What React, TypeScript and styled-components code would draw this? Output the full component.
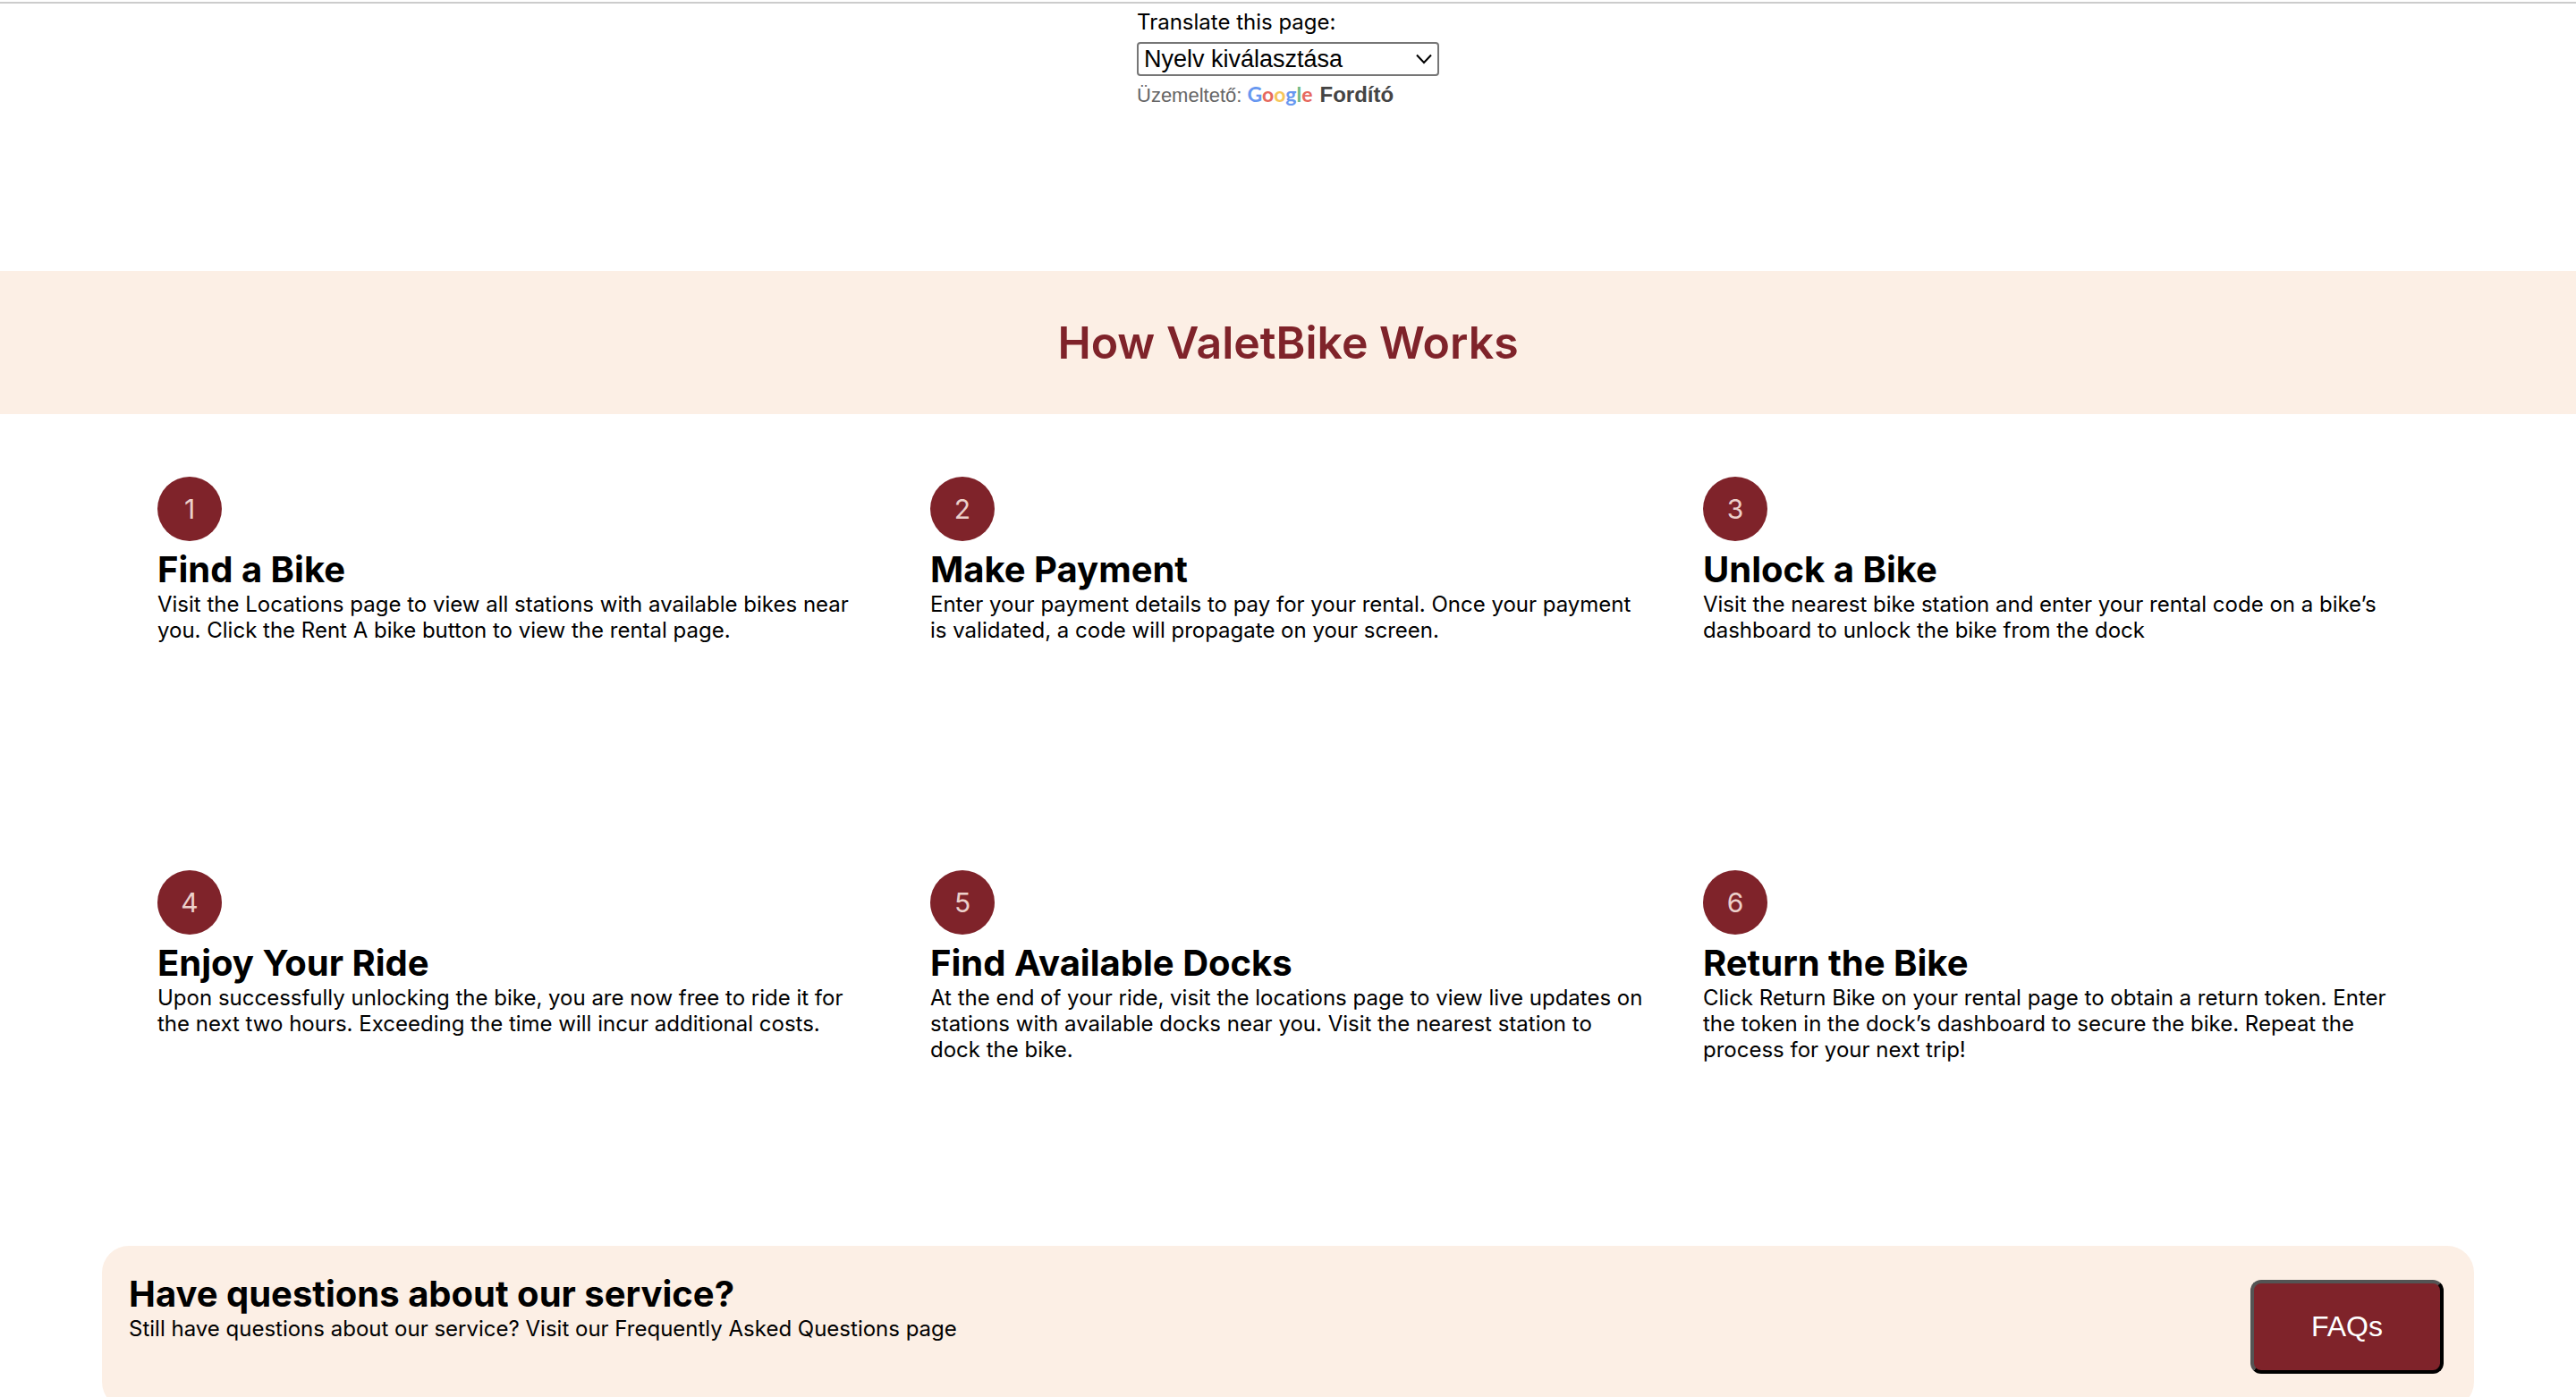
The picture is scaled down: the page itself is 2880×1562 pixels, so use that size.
import React from "react";
import styled, { createGlobalStyle } from "styled-components";

const maroon = "#7f232a";
const cream = "#fcefe5";

const GlobalStyle = createGlobalStyle`
  *, *::before, *::after { box-sizing: border-box; }
  body {
    margin: 0;
    background: #fff;
    color: #000;
    font-family: Inter, "Liberation Sans", sans-serif;
    font-size: 24px;
    line-height: 29px;
  }
  h1, h2, p { margin: 0; }
`;

const Page = styled.div`
  display: flex;
  flex-direction: column;
  height: 100vh;
  overflow: hidden;
`;

const TranslateBar = styled.header`
  display: flex;
  justify-content: center;
  flex-shrink: 0;
  min-height: 301px;
  margin-top: 2px;
  padding-top: 6px;
  border-top: 2px solid #ccc;
`;

const Translate = styled.div`
  display: flex;
  flex-direction: column;
  width: 338px;
`;

const SelectWrap = styled.div`
  display: grid;
  align-items: center;
  margin: 8px 0;
`;

const LanguageSelect = styled.select`
  grid-area: 1 / 1;
  width: 100%;
  height: 38px;
  padding: 0 6px;
  appearance: none;
  background: #fff;
  border: 2px solid #767676;
  border-radius: 4px;
  color: #000;
  font: 27px "Liberation Sans", Arial, sans-serif;
`;

const Chevron = styled.svg`
  grid-area: 1 / 1;
  justify-self: end;
  width: 18px;
  height: 12px;
  margin-right: 8px;
  pointer-events: none;
`;

const PoweredBy = styled.div`
  display: flex;
  align-items: baseline;
  color: #666;
  font: 22px/24px "Liberation Sans", Arial, sans-serif;
`;

const TranslateLink = styled.a`
  display: flex;
  align-items: baseline;
  gap: 8px;
  margin-left: 6px;
  color: #444;
  font-size: 24px;
  font-weight: 700;
  text-decoration: none;
`;

const GoogleMark = styled.span`
  font-family: Lato, sans-serif;
  font-size: 23px;
  font-weight: 700;
`;

const Letter = styled.span<{ $color: string }>`
  color: ${(p) => p.$color};
`;

const Banner = styled.section`
  display: flex;
  align-items: center;
  justify-content: center;
  flex-shrink: 0;
  height: 160px;
  background: ${cream};
`;

const BannerTitle = styled.h1`
  color: ${maroon};
  font-size: 50px;
  font-weight: 600;
  line-height: 60px;
`;

const Steps = styled.main`
  display: grid;
  grid-template-columns: repeat(3, 1fr);
  grid-auto-rows: 420px;
  row-gap: 20px;
  flex-shrink: 0;
  padding: 70px 144px 0;
`;

const StepCard = styled.article`
  padding: 0 32px;
`;

const StepNumber = styled.div`
  display: flex;
  align-items: center;
  justify-content: center;
  width: 72px;
  height: 72px;
  margin-bottom: 8px;
  border-radius: 50%;
  background: ${maroon};
  color: #ecd0ca;
  font-size: 30px;
`;

const Heading = styled.h2`
  font-size: 40px;
  font-weight: 700;
  line-height: 48px;
`;

const FaqCard = styled.section`
  display: flex;
  justify-content: space-between;
  flex-shrink: 0;
  height: 182px;
  margin: 0 114px;
  padding: 30px 34px 30px 30px;
  border-radius: 30px;
  background: ${cream};
`;

const FaqButton = styled.button`
  width: 216px;
  height: 105px;
  margin-top: 8px;
  border: 4px outset #000;
  border-radius: 12px;
  background: ${maroon};
  color: #fff;
  font: 32px "Liberation Sans", Arial, sans-serif;
`;

const steps = [
  {
    title: "Find a Bike",
    text: "Visit the Locations page to view all stations with available bikes near you. Click the Rent A bike button to view the rental page.",
  },
  {
    title: "Make Payment",
    text: "Enter your payment details to pay for your rental. Once your payment is validated, a code will propagate on your screen.",
  },
  {
    title: "Unlock a Bike",
    text: "Visit the nearest bike station and enter your rental code on a bike’s dashboard to unlock the bike from the dock",
  },
  {
    title: "Enjoy Your Ride",
    text: "Upon successfully unlocking the bike, you are now free to ride it for the next two hours. Exceeding the time will incur additional costs.",
  },
  {
    title: "Find Available Docks",
    text: "At the end of your ride, visit the locations page to view live updates on stations with available docks near you. Visit the nearest station to dock the bike.",
  },
  {
    title: "Return the Bike",
    text: "Click Return Bike on your rental page to obtain a return token. Enter the token in the dock’s dashboard to secure the bike. Repeat the process for your next trip!",
  },
];

const googleLetters = [
  ["G", "#6797f0"],
  ["o", "#e6695e"],
  ["o", "#f6c65b"],
  ["g", "#6797f0"],
  ["l", "#71b984"],
  ["e", "#e6695e"],
];

export default function App() {
  return (
    <Page>
      <GlobalStyle />
      <TranslateBar>
        <Translate>
          <label htmlFor="language">Translate this page:</label>
          <SelectWrap>
            <LanguageSelect id="language" defaultValue="">
              <option value="">Nyelv kiválasztása</option>
            </LanguageSelect>
            <Chevron viewBox="0 0 18 12" fill="none" stroke="#000" strokeWidth="2" aria-hidden="true">
              <path d="M1 1.5 9 10 17 1.5" />
            </Chevron>
          </SelectWrap>
          <PoweredBy>
            Üzemeltető:
            <TranslateLink href="#translate">
              <GoogleMark>
                {googleLetters.map(([letter, color], i) => (
                  <Letter key={i} $color={color}>{letter}</Letter>
                ))}
              </GoogleMark>
              Fordító
            </TranslateLink>
          </PoweredBy>
        </Translate>
      </TranslateBar>
      <Banner>
        <BannerTitle>How ValetBike Works</BannerTitle>
      </Banner>
      <Steps>
        {steps.map((step, i) => (
          <StepCard key={step.title}>
            <StepNumber>{i + 1}</StepNumber>
            <Heading>{step.title}</Heading>
            <p>{step.text}</p>
          </StepCard>
        ))}
      </Steps>
      <FaqCard>
        <div>
          <Heading>Have questions about our service?</Heading>
          <p>Still have questions about our service? Visit our Frequently Asked Questions page</p>
        </div>
        <FaqButton type="button">FAQs</FaqButton>
      </FaqCard>
    </Page>
  );
}
